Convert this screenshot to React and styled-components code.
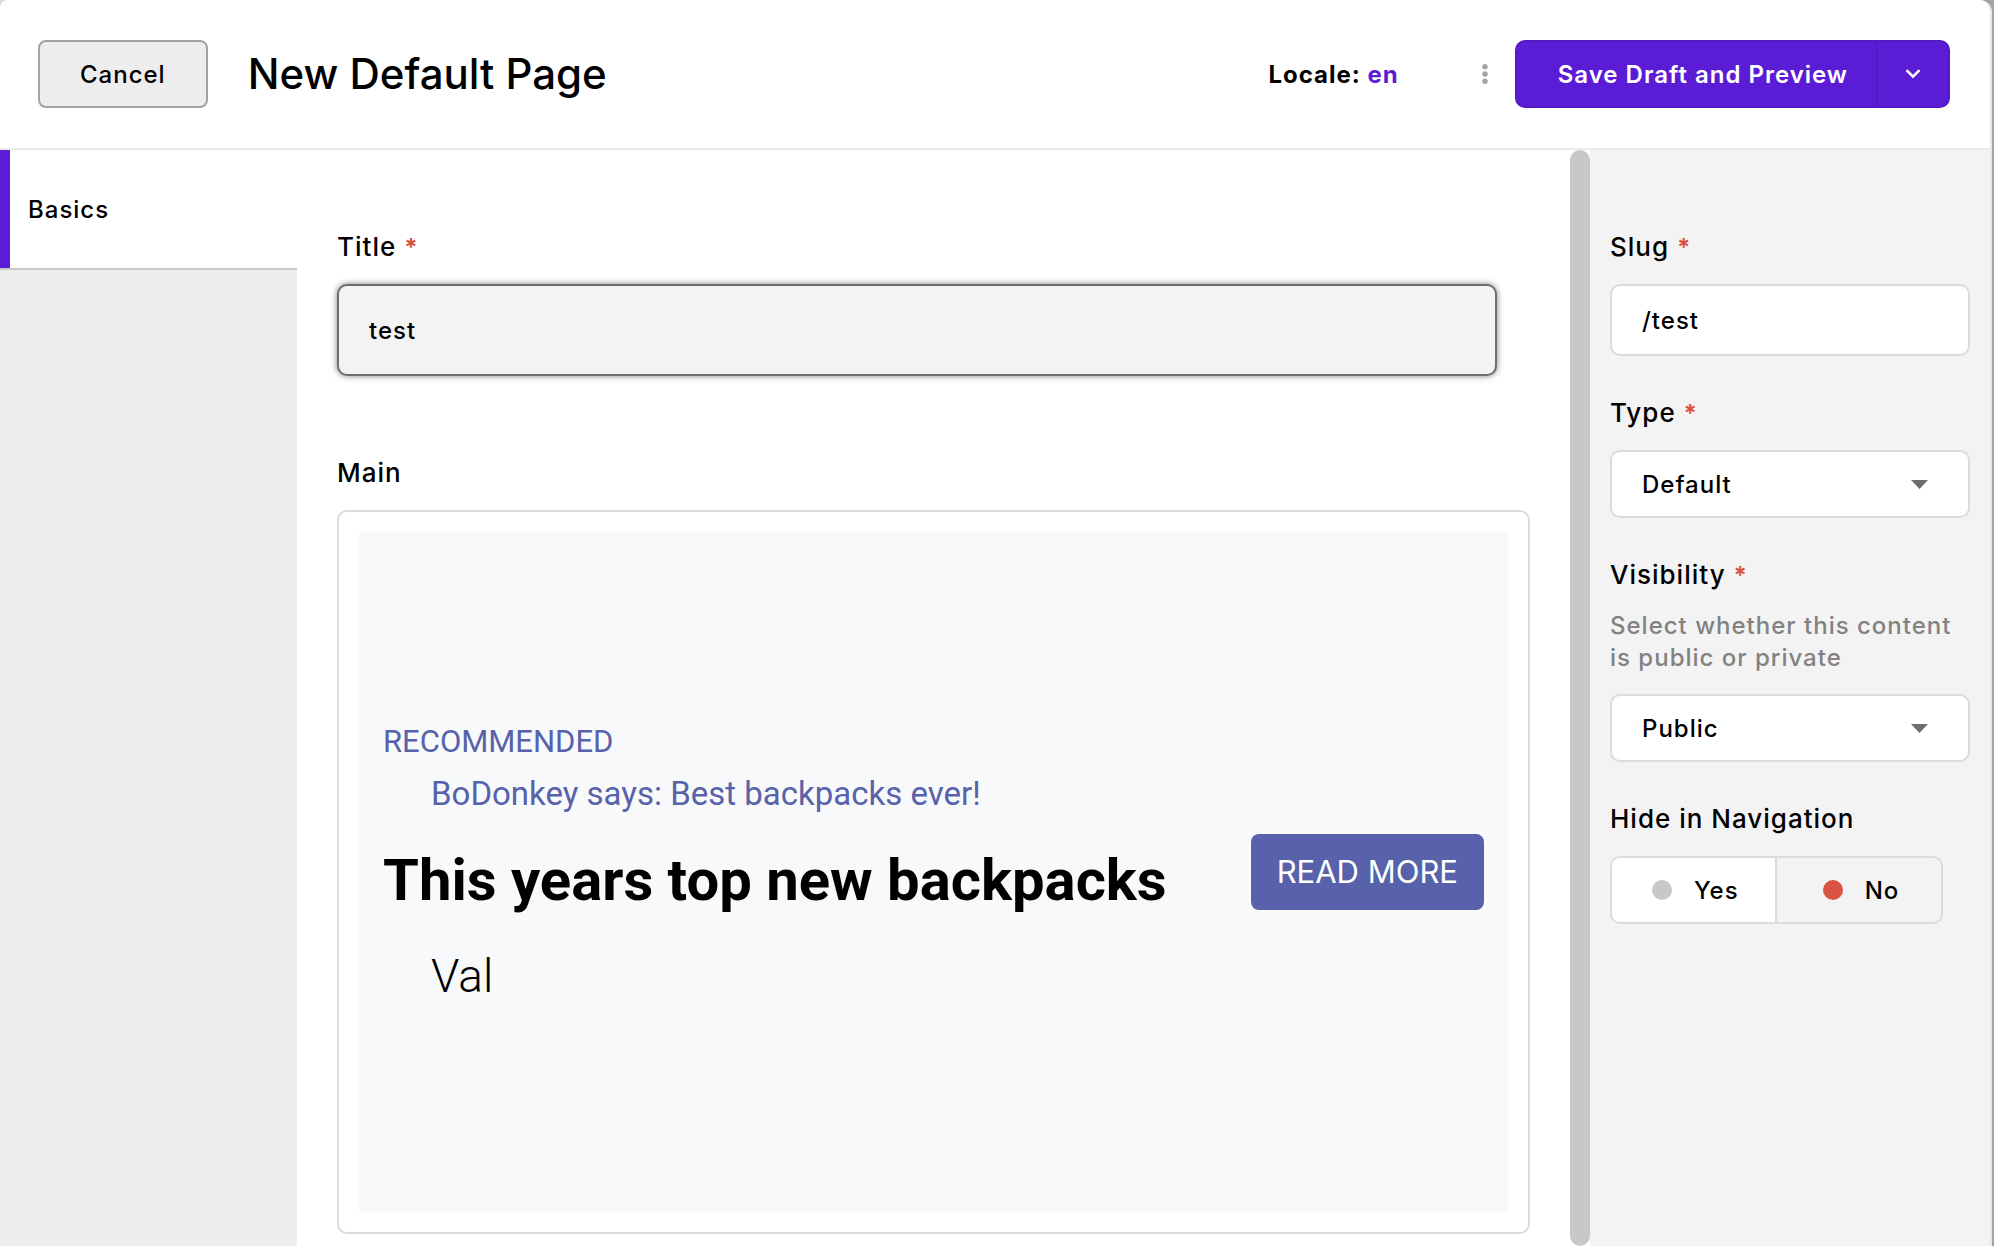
import React from "react";
import styled, { createGlobalStyle } from "styled-components";

const ui = `Inter, "Liberation Sans", sans-serif`;
const display = `Roboto, "Open Sans", sans-serif`;

const GlobalStyle = createGlobalStyle`
  *, *::before, *::after { box-sizing: border-box; }
  body {
    margin: 0;
    background: linear-gradient(to right, #dddddd 50%, #a3a3a3 50%);
    color: #000;
    font-family: ${ui};
    font-size: 24px;
    font-weight: 500;
    letter-spacing: 1px;
  }
  button, input, select { font: inherit; letter-spacing: inherit; color: inherit; margin: 0; }
`;

const Window = styled.div`
  display: flex;
  flex-direction: column;
  height: 100vh;
  margin-right: 2px;
  overflow: hidden;
  background: #fff;
  border-right: 2px solid #e8e8e8;
  border-radius: 8px 12px 0 0;
`;

const Header = styled.header`
  display: flex;
  flex: none;
  align-items: center;
  padding: 40px 40px 40px 38px;
  border-bottom: 2px solid #ebebeb;
`;

const CancelButton = styled.button`
  height: 68px;
  padding: 0 40px;
  border: 2px solid #a3a3a3;
  border-radius: 8px;
  background: #ededed;
`;

const PageTitle = styled.h1`
  flex: 1;
  margin: 0 0 0 40px;
  font-size: 42px;
  font-weight: 500;
  line-height: 52px;
  letter-spacing: 0;
`;

const Locale = styled.div`
  margin-right: 80px;
  font-weight: 700;
`;

const LocaleLink = styled.a`
  color: #5b1cd6;
  text-decoration: none;
`;

const MoreButton = styled.button`
  display: flex;
  margin-right: 24px;
  padding: 0;
  border: 0;
  background: none;
`;

const SplitButton = styled.div`
  display: flex;
  height: 68px;
  overflow: hidden;
  border: 2px solid #531cc2;
  border-radius: 10px;
  background: #5b1cd6;
`;

const SaveButton = styled.button`
  padding: 0 28px 0 41px;
  border: 0;
  background: #5b1cd6;
  color: #fff;
  font-weight: 600;
`;

const SaveMenuButton = styled.button`
  display: flex;
  align-items: center;
  justify-content: center;
  width: 72px;
  padding: 0;
  border: 0;
  border-left: 2px solid #531cc2;
  background: #5b1cd6;
`;

const Body = styled.div`
  display: flex;
  flex: 1;
  min-height: 0;
`;

const Sidebar = styled.nav`
  flex: none;
  width: 297px;
  background: #ededed;
`;

const SidebarTab = styled.button`
  display: block;
  width: 100%;
  height: 120px;
  padding: 0 18px;
  border: 0;
  border-bottom: 2px solid #c8c8c8;
  background: linear-gradient(to right, #5b1cd6 10px, #fff 10px);
  text-align: left;
  text-indent: 10px;
`;

const Main = styled.main`
  flex: 1;
  min-width: 0;
  padding: 80px 40px 0;
  overflow: hidden;
`;

const Scrollbar = styled.div`
  flex: none;
  width: 20px;
  border-radius: 10px;
  background: #c8c8c8;
`;

const Aside = styled.aside`
  flex: none;
  width: 400px;
  padding: 80px 20px 0;
  background: #f3f3f3;
`;

const Field = styled.div`
  margin-bottom: ${(p) => p.$gap || 40}px;
`;

const FieldSet = styled.fieldset`
  margin: 0;
  padding: 0;
  border: 0;
`;

const Label = styled.label`
  display: block;
  margin-bottom: 20px;
  padding: 0;
  font-size: 26px;
  line-height: 34px;
`;

const Required = styled.span`
  color: #da5243;
  font-size: 24px;
  font-weight: 700;
  line-height: 1;
`;

const Help = styled.p`
  margin: -2px 0 20px;
  color: #828282;
  line-height: 32px;
`;

const TitleInput = styled.input`
  display: block;
  width: calc(100% - 33px);
  height: 92px;
  padding: 0 30px;
  border: 2px solid #6e6e6e;
  border-radius: 10px;
  outline: 0;
  background: #f3f3f3;
  box-shadow: 0 0 6px rgba(0, 0, 0, 0.5);
`;

const SlugInput = styled.input`
  display: block;
  width: 100%;
  height: 72px;
  padding: 0 30px;
  border: 2px solid #dbdbdb;
  border-radius: 10px;
  background: #fff;
`;

const SelectWrap = styled.div`
  position: relative;
`;

const Select = styled.select`
  display: block;
  width: 100%;
  height: 68px;
  padding: 0 30px;
  border: 2px solid #dbdbdb;
  border-radius: 10px;
  appearance: none;
  background: #fff;
`;

const Caret = styled.svg`
  position: absolute;
  top: 30px;
  right: 42px;
  pointer-events: none;
`;

const Toggle = styled.div`
  display: inline-flex;
  height: 68px;
  overflow: hidden;
  border: 2px solid #dbdbdb;
  border-radius: 10px;
`;

const ToggleOption = styled.label`
  display: flex;
  align-items: center;
  gap: 22px;
  padding: 0 ${(p) => (p.$active ? 42 : 36)}px 0 ${(p) => (p.$active ? 46 : 40)}px;
  border-left: ${(p) => (p.$active ? "2px solid #dbdbdb" : "0")};
  background: ${(p) => (p.$active ? "#f3f3f3" : "#fff")};
`;

const Dot = styled.input`
  width: 20px;
  height: 20px;
  border-radius: 50%;
  appearance: none;
  background: #c8c8c8;
  &:checked { background: #da5243; }
`;

const Area = styled.section`
  padding: 20px;
  border: 2px solid #dbdbdb;
  border-radius: 10px;
`;

const Hero = styled.div`
  display: flex;
  align-items: center;
  justify-content: space-between;
  padding: 184px 24px;
  background: #f8f9fb;
  letter-spacing: 0;
`;

const Eyebrow = styled.p`
  margin: 0;
  color: #5762aa;
  font-family: ${display};
  font-size: 31px;
  font-weight: 400;
  line-height: 52px;
`;

const Quote = styled.p`
  margin: 0 0 0 48px;
  color: #5762aa;
  font-family: ${display};
  font-size: 33px;
  font-weight: 400;
  line-height: 52px;
`;

const Headline = styled.h2`
  margin: 12px 0 4px;
  font-family: ${display};
  font-size: 58px;
  font-weight: 700;
  line-height: 96px;
`;

const Author = styled.p`
  margin: 0 0 8px 48px;
  font-family: ${display};
  font-size: 46px;
  font-weight: 300;
  line-height: 88px;
`;

const ReadMore = styled.a`
  padding: 0 26px;
  border-radius: 8px;
  background: #5762aa;
  color: #fff;
  font-size: 31px;
  font-weight: 400;
  line-height: 76px;
  text-decoration: none;
`;

function SelectField({ id, label, help, value }) {
  return (
    <Field>
      <Label htmlFor={id}>
        {label} <Required>*</Required>
      </Label>
      {help && <Help>{help}</Help>}
      <SelectWrap>
        <Select id={id} defaultValue={value}>
          <option>{value}</option>
        </Select>
        <Caret width="17" height="9" viewBox="0 0 17 9" aria-hidden="true">
          <path d="M0 0h17L8.500 9z" fill="#6e6e6e" />
        </Caret>
      </SelectWrap>
    </Field>
  );
}

export default function App() {
  return (
    <>
      <GlobalStyle />
      <Window>
        <Header>
          <CancelButton type="button">Cancel</CancelButton>
          <PageTitle>New Default Page</PageTitle>
          <Locale>
            Locale: <LocaleLink href="#locale">en</LocaleLink>
          </Locale>
          <MoreButton type="button" aria-label="More options">
            <svg width="12" height="20" viewBox="0 0 12 20" fill="#a3a3a3">
              <circle cx="6" cy="2.700" r="2.700" />
              <circle cx="6" cy="10" r="2.700" />
              <circle cx="6" cy="17.300" r="2.700" />
            </svg>
          </MoreButton>
          <SplitButton>
            <SaveButton type="button">Save Draft and Preview</SaveButton>
            <SaveMenuButton type="button" aria-label="More save options">
              <svg width="16" height="10" viewBox="0 0 16 10" fill="none" stroke="#fff" strokeWidth="2.600">
                <path d="M1.500 1.200l6.500 6.500 6.500-6.500" />
              </svg>
            </SaveMenuButton>
          </SplitButton>
        </Header>
        <Body>
          <Sidebar>
            <SidebarTab type="button">Basics</SidebarTab>
          </Sidebar>
          <Main>
            <Field $gap={80}>
              <Label htmlFor="title">
                Title <Required>*</Required>
              </Label>
              <TitleInput id="title" defaultValue="test" />
            </Field>
            <Label as="div">Main</Label>
            <Area aria-label="Main">
              <Hero>
                <div>
                  <Eyebrow>RECOMMENDED</Eyebrow>
                  <Quote>BoDonkey says: Best backpacks ever!</Quote>
                  <Headline>This years top new backpacks</Headline>
                  <Author>Val</Author>
                </div>
                <ReadMore href="#read-more">READ MORE</ReadMore>
              </Hero>
            </Area>
          </Main>
          <Scrollbar aria-hidden="true" />
          <Aside>
            <Field>
              <Label htmlFor="slug">
                Slug <Required>*</Required>
              </Label>
              <SlugInput id="slug" defaultValue="/test" />
            </Field>
            <SelectField id="type" label="Type" value="Default" />
            <SelectField
              id="visibility"
              label="Visibility"
              help="Select whether this content is public or private"
              value="Public"
            />
            <FieldSet>
              <Label as="legend">Hide in Navigation</Label>
              <Toggle>
                <ToggleOption>
                  <Dot type="radio" name="hide" value="yes" />
                  Yes
                </ToggleOption>
                <ToggleOption $active>
                  <Dot type="radio" name="hide" value="no" defaultChecked />
                  No
                </ToggleOption>
              </Toggle>
            </FieldSet>
          </Aside>
        </Body>
      </Window>
    </>
  );
}
